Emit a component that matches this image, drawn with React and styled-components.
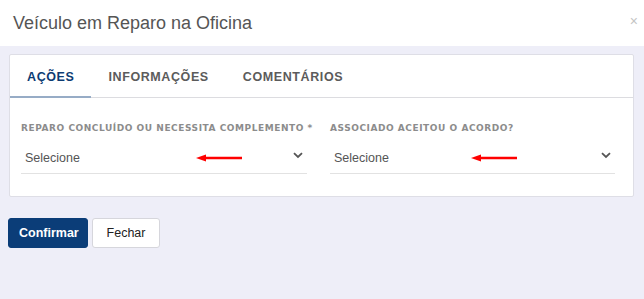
import React, { useState } from 'react';
import styled, { createGlobalStyle } from 'styled-components';

const GlobalStyle = createGlobalStyle`
  html, body {
    margin: 0;
    padding: 0;
    background: #eeeef8;
    font-family: "Liberation Sans", Arial, sans-serif;
  }
`

const Page = styled.div`
  width: 644px;
  height: 299px;
  background: #eeeef8;
  display: flex;
  flex-direction: column;
`

const Header = styled.div`
  height: 46px;
  background: #fff;
  display: flex;
  align-items: center;
  justify-content: space-between;
  padding: 0 6px 0 13px;
  box-sizing: border-box;
  flex-shrink: 0;
`

const Title = styled.h1`
  margin: 0;
  font-size: 18px;
  font-weight: 400;
  color: #555;
`

const Close = styled.span`
  font-size: 14px;
  color: #c4c4c4;
  margin-bottom: 4px;
`

const Body = styled.div`
  padding: 8px 10px 0 9px;
`

const Card = styled.div`
  background: #fff;
  border: 1px solid #dedee6;
  border-radius: 2px;
  height: 143px;
  box-sizing: border-box;
`

const Tabs = styled.div`
  display: flex;
  border-bottom: 1px solid #dcdce0;
  height: 42px;
`

const Tab = styled.div`
  padding: 0 17px;
  display: flex;
  align-items: center;
  font-size: 12.5px;
  font-weight: 700;
  letter-spacing: 0.6px;
  color: ${p => (p.$active ? '#0d3b73' : '#5b5b5b')};
  box-shadow: ${p => (p.$active ? 'inset 0 -2px 0 #97acc6' : 'none')};
  margin-bottom: -1px;
  cursor: pointer;
`

const Fields = styled.div`
  display: grid;
  grid-template-columns: 286px 285px;
  column-gap: 23px;
  padding: 25px 0 0 11px;
`

const Field = styled.div`
  display: flex;
  flex-direction: column;
`

const Label = styled.label`
  font-family: "DejaVu Sans", "Liberation Sans", sans-serif;
  font-size: 9px;
  font-weight: 700;
  color: #8c8c8c;
  letter-spacing: 0.55px;
  text-transform: uppercase;
  white-space: nowrap;
`

const Select = styled.div`
  position: relative;
  height: 34px;
  margin-top: 7px;
  border-bottom: 1px solid #e2e2e2;
  display: flex;
  align-items: center;
  justify-content: space-between;
  padding: 2px 4px 0 4px;
  box-sizing: border-box;
  font-size: 12.5px;
  color: #555;
`

const ChevronIcon = styled.svg`
  margin-top: -4px;
`

const Arrow = styled.svg`
  position: absolute;
  top: 13px;
  left: ${p => p.$left}px;
`

const Actions = styled.div`
  display: flex;
  gap: 4px;
  padding: 21px 0 0 8px;
`

const Button = styled.button`
  height: 30px;
  padding: 0 10px;
  border-radius: 3px;
  font-family: "Liberation Sans", Arial, sans-serif;
  font-size: 12.5px;
  cursor: pointer;
  background: ${p => (p.$primary ? '#0b3d78' : '#fff')};
  color: ${p => (p.$primary ? '#fff' : '#222')};
  font-weight: ${p => (p.$primary ? 700 : 400)};
  border: 1px solid ${p => (p.$primary ? '#0b3d78' : '#d6d6dc')};
  width: ${p => p.$w}px;
`

const Chevron = () => (
  <ChevronIcon width="10" height="7" viewBox="0 0 10 7">
    <path d="M1 1.2 L5 5 L9 1.2" fill="none" stroke="#555" strokeWidth="1.8" />
  </ChevronIcon>
)

const RedArrow = ({ left }) => (
  <Arrow $left={left} width="48" height="10" viewBox="0 0 48 10">
    <path d="M10 5 H47" stroke="#f00" strokeWidth="2.6" />
    <path d="M1 5 L11 1.5 L11 8.5 Z" fill="#f00" />
  </Arrow>
)

export default function App() {
  const [tab, setTab] = useState(0)
  const tabs = ['Ações', 'Informações', 'Comentários']

  const fields = [
    { label: 'Reparo concluído ou necessita complemento *', arrow: 174 },
    { label: 'Associado aceitou o acordo?', arrow: 140 }
  ]

  return (
    <Page>
      <GlobalStyle />
      <Header>
        <Title>Veículo em Reparo na Oficina</Title>
        <Close>×</Close>
      </Header>
      <Body>
        <Card>
          <Tabs>
            {tabs.map((t, i) => (
              <Tab key={i} $active={tab === i} onClick={() => setTab(i)}>
                {t.toUpperCase()}
              </Tab>
            ))}
          </Tabs>
          <Fields>
            {fields.map((f, i) => (
              <Field key={i}>
                <Label>{f.label}</Label>
                <Select>
                  <span>Selecione</span>
                  <Chevron />
                  <RedArrow left={f.arrow} />
                </Select>
              </Field>
            ))}
          </Fields>
        </Card>
      </Body>
      <Actions>
        <Button $primary $w={80}>Confirmar</Button>
        <Button $w={68}>Fechar</Button>
      </Actions>
    </Page>
  )
}
